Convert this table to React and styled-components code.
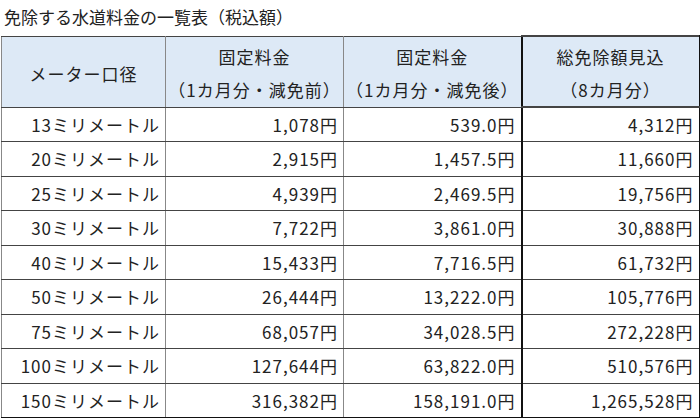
import React from 'react';
import styled, { createGlobalStyle } from 'styled-components';

const GlobalStyle = createGlobalStyle`
  body {
    margin: 0;
    background: #fff;
    font-family: "Noto Sans CJK JP", "Noto Sans", sans-serif;
    color: #222;
  }
`;

const Page = styled.div`
  width: 700px;
  height: 418px;
  overflow: hidden;
`;

const Title = styled.div`
  height: 35px;
  line-height: 34px;
  padding-left: 4px;
  font-size: 17px;
  box-sizing: border-box;
`;

const Table = styled.table`
  border-collapse: collapse;
  table-layout: fixed;
  margin-left: 1px;
  width: 698px;
  font-size: 17px;
  letter-spacing: 1px;
`;

const HeadCell = styled.th`
  background: #dde9f6;
  font-weight: normal;
  height: 69px;
  padding: 3px 0 0;
  box-sizing: border-box;
  text-align: center;
  vertical-align: middle;
  border: 1px solid #444;
  border-left-color: ${p => (p.$strong ? '#111' : '#888')};
  border-right-color: ${p => (p.$strong ? '#111' : '#888')};
  border-width: ${p => (p.$strong ? '2px' : '1px')};
`;

const HeadLine = styled.div`
  line-height: 33px;
  white-space: nowrap;
`;

const Cell = styled.td`
  height: 34.5px;
  padding: 0 5px 0 0;
  box-sizing: border-box;
  text-align: right;
  white-space: nowrap;
  border: 1px solid #444;
  border-left-color: ${p => (p.$strong ? '#111' : '#888')};
  border-right-color: ${p => (p.$strong ? '#111' : '#888')};
  border-left-width: ${p => (p.$strong ? '2px' : '1px')};
  border-right-width: ${p => (p.$strong ? '2px' : '1px')};
  border-bottom-width: ${p => (p.$last ? '2px' : '1px')};
  border-bottom-color: ${p => (p.$last ? '#111' : '#444')};
`;

const rows = [
  ['13', '1,078', '539.0', '4,312'],
  ['20', '2,915', '1,457.5', '11,660'],
  ['25', '4,939', '2,469.5', '19,756'],
  ['30', '7,722', '3,861.0', '30,888'],
  ['40', '15,433', '7,716.5', '61,732'],
  ['50', '26,444', '13,222.0', '105,776'],
  ['75', '68,057', '34,028.5', '272,228'],
  ['100', '127,644', '63,822.0', '510,576'],
  ['150', '316,382', '158,191.0', '1,265,528'],
];

export default function App() {
  return (
    <Page>
      <GlobalStyle />
      <Title>免除する水道料金の一覧表（税込額）</Title>
      <Table>
        <colgroup>
          <col style={{ width: 164 }} />
          <col style={{ width: 178 }} />
          <col style={{ width: 178 }} />
          <col style={{ width: 178 }} />
        </colgroup>
        <thead>
          <tr>
            <HeadCell>
              <HeadLine>メーター口径</HeadLine>
            </HeadCell>
            <HeadCell>
              <HeadLine>固定料金</HeadLine>
              <HeadLine>（1カ月分・減免前）</HeadLine>
            </HeadCell>
            <HeadCell>
              <HeadLine>固定料金</HeadLine>
              <HeadLine>（1カ月分・減免後）</HeadLine>
            </HeadCell>
            <HeadCell $strong>
              <HeadLine>総免除額見込</HeadLine>
              <HeadLine>（8カ月分）</HeadLine>
            </HeadCell>
          </tr>
        </thead>
        <tbody>
          {rows.map((r, i) => {
            const last = i === rows.length - 1;
            return (
              <tr key={r[0]}>
                <Cell $last={last}>{r[0]}ミリメートル</Cell>
                <Cell $last={last}>{r[1]}円</Cell>
                <Cell $last={last}>{r[2]}円</Cell>
                <Cell $strong $last={last}>{r[3]}円</Cell>
              </tr>
            );
          })}
        </tbody>
      </Table>
    </Page>
  );
}
